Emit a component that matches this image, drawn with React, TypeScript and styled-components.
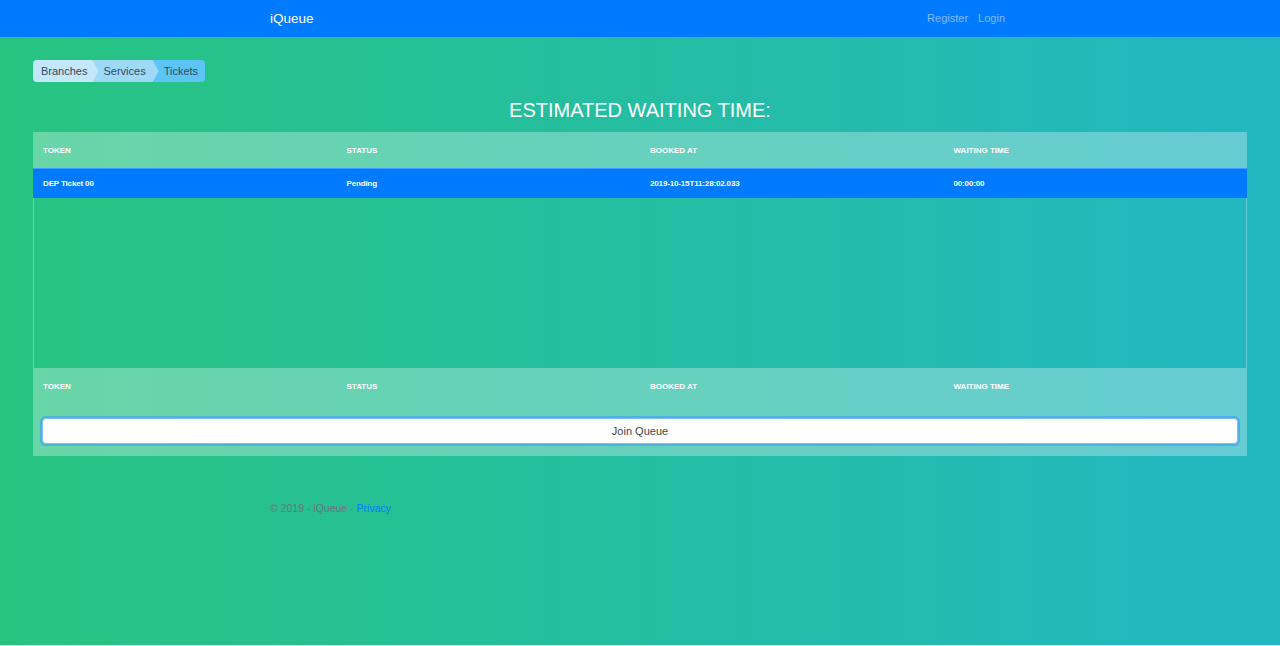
import React from "react";
import styled, { createGlobalStyle } from "styled-components";

const Global = createGlobalStyle`
  html { background: #d8f5ec; }
  body {
    margin: 0;
    font-family: "Liberation Sans", Arial, sans-serif;
    color: #212529;
  }
  * { box-sizing: border-box; }
`;

const Page = styled.div`
  height: 645px;
  background: linear-gradient(to right, #27c480, #23b7c3);
  overflow: hidden;
`;

const Navbar = styled.header`
  height: 37px;
  background: #007bff;
`;

const NavInner = styled.div`
  width: 740px;
  height: 100%;
  margin: 0 auto;
  display: flex;
  align-items: center;
  justify-content: space-between;
`;

const Brand = styled.a`
  color: #fff;
  font-size: 13.5px;
  text-decoration: none;
`;

const NavLinks = styled.nav`
  display: flex;
  gap: 10px;
  padding-right: 5px;
`;

const NavLink = styled.a`
  color: rgba(255, 255, 255, 0.5);
  font-size: 11px;
  line-height: 12px;
  margin-top: -2px;
  text-decoration: none;
`;

const Main = styled.main`
  padding: 23px 33px 0 33px;
`;

const Crumbs = styled.ol`
  display: flex;
  margin: 0;
  padding: 0;
  list-style: none;
  width: max-content;
  border-radius: 4px;
  overflow: hidden;
`;

type Pos = "first" | "middle" | "last";

const padFor = (p: Pos) =>
  p === "first" ? "0 11px 0 8px" : p === "middle" ? "0 13px 0 11px" : "0 7px 0 11px";

const Crumb = styled.li<{ $bg: string; $z: number; $pos: Pos }>`
  position: relative;
  z-index: ${(p) => p.$z};
  height: 22px;
  display: flex;
  align-items: center;
  font-size: 11px;
  color: #34495e;
  background: ${(p) => p.$bg};
  padding: ${(p) => padFor(p.$pos)};
  margin-left: ${(p) => (p.$pos === "first" ? "0" : "-6px")};
  clip-path: ${(p) =>
    p.$pos === "last"
      ? "none"
      : "polygon(0 0, calc(100% - 6px) 0, 100% 50%, calc(100% - 6px) 100%, 0 100%)"};
`;

const Title = styled.h2`
  margin: 16px 0 10px;
  text-align: center;
  color: #fff;
  font-size: 20px;
  line-height: 24px;
  font-weight: normal;
`;

const Panel = styled.section`
  width: 1214px;
`;

const Row = styled.div<{ $kind: "head" | "data" | "foot" }>`
  display: grid;
  grid-template-columns: repeat(4, 1fr);
  align-items: center;
  height: ${(p) => (p.$kind === "data" ? "30px" : "36px")};
  background: ${(p) =>
    p.$kind === "head" ? "rgba(255,255,255,0.3)" : p.$kind === "data" ? "#007bff" : "transparent"};
  border-top: ${(p) => (p.$kind === "data" ? "1px solid rgba(255,255,255,0.25)" : "none")};
  color: #fff;
  font-size: 8px;
  font-weight: bold;
`;

const Cell = styled.div<{ $kind: "head" | "data" | "foot" }>`
  padding-left: 10px;
  text-transform: ${(p) => (p.$kind === "data" ? "none" : "uppercase")};
  letter-spacing: ${(p) => (p.$kind === "data" ? "-0.15px" : "0")};
`;

const Empty = styled.div`
  height: 170px;
  border-left: 1px solid rgba(255, 255, 255, 0.3);
  border-right: 1px solid rgba(255, 255, 255, 0.3);
`;

const Foot = styled.div`
  background: rgba(255, 255, 255, 0.3);
  padding-bottom: 12px;
`;

const ActionWrap = styled.div`
  padding: 14px 9px 0;
`;

const JoinButton = styled.button`
  display: block;
  width: 100%;
  height: 26px;
  background: #fff;
  border: 1px solid #80bdff;
  border-radius: 4px;
  box-shadow: 0 0 0 2px rgba(60, 150, 240, 0.55);
  font-family: inherit;
  font-size: 11px;
  color: #444;
  cursor: pointer;
`;

const Footer = styled.footer`
  width: 740px;
  margin: 44px auto 0;
  font-size: 10.5px;
  line-height: 16px;
  color: #6c757d;
`;

const FooterLink = styled.a`
  color: #007bff;
  text-decoration: none;
`;

const columns = ["Token", "Status", "Booked At", "Waiting Time"];
const rows = [["DEP Ticket 00", "Pending", "2019-10-15T11:28:02.033", "00:00:00"]];

export default function App() {
  return (
    <>
      <Global />
      <Page>
        <Navbar>
          <NavInner>
            <Brand href="#">iQueue</Brand>
            <NavLinks>
              <NavLink href="#">Register</NavLink>
              <NavLink href="#">Login</NavLink>
            </NavLinks>
          </NavInner>
        </Navbar>
        <Main>
          <Crumbs>
            <Crumb $bg="#c3e8fb" $z={3} $pos="first">Branches</Crumb>
            <Crumb $bg="#9ed9f8" $z={2} $pos="middle">Services</Crumb>
            <Crumb $bg="#5cc5f6" $z={1} $pos="last">Tickets</Crumb>
          </Crumbs>
          <Title>ESTIMATED WAITING TIME:</Title>
          <Panel>
            <Row $kind="head">
              {columns.map((c) => (
                <Cell key={c} $kind="head">{c}</Cell>
              ))}
            </Row>
            {rows.map((r) => (
              <Row key={r[0]} $kind="data">
                {r.map((v, i) => (
                  <Cell key={i} $kind="data">{v}</Cell>
                ))}
              </Row>
            ))}
            <Empty />
            <Foot>
              <Row $kind="foot">
                {columns.map((c) => (
                  <Cell key={c} $kind="foot">{c}</Cell>
                ))}
              </Row>
              <ActionWrap>
                <JoinButton>Join Queue</JoinButton>
              </ActionWrap>
            </Foot>
          </Panel>
        </Main>
        <Footer>
          © 2019 - iQueue - <FooterLink href="#">Privacy</FooterLink>
        </Footer>
      </Page>
    </>
  );
}
